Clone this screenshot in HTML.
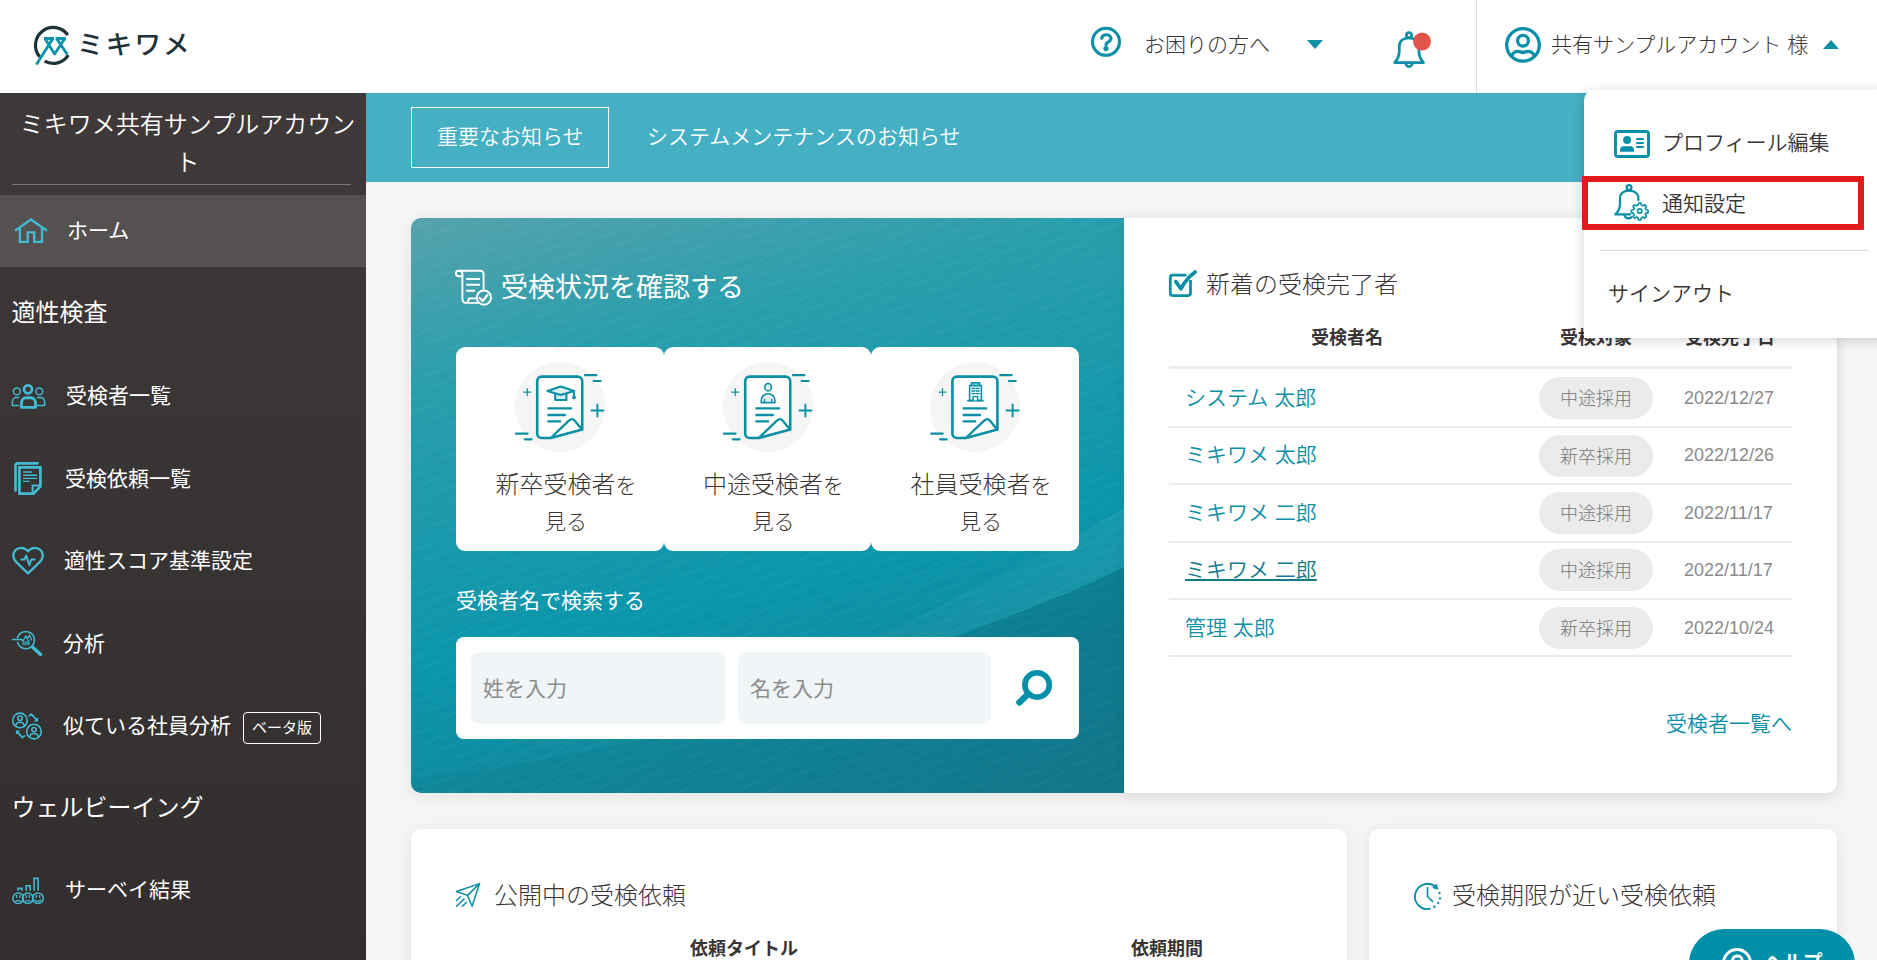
<!DOCTYPE html>
<html lang="ja">
<head>
<meta charset="utf-8">
<title>ミキワメ</title>
<style>
*{box-sizing:border-box;margin:0;padding:0}
html,body{width:1877px;height:960px;overflow:hidden;background:#f5f5f5}
body{font-family:"Liberation Sans","Noto Sans CJK JP",sans-serif;font-weight:300;color:#3a3535;font-size:21px;position:relative}
.abs{position:absolute}
.t{position:absolute;white-space:nowrap;line-height:1}
svg{position:absolute;overflow:visible}
/* header */
#hd{position:absolute;left:0;top:0;width:1877px;height:93px;background:#fff}
/* sidebar */
#sb{position:absolute;left:0;top:93px;width:366px;height:867px;background:linear-gradient(180deg,#3f3939 0%,#3a3535 40%,#322e2e 100%);color:#fff}
.w{font-weight:400}
/* main */
#nb{position:absolute;left:366px;top:93px;width:1511px;height:89px;background:#45afc3}
#tp{position:absolute;left:411px;top:218px;width:713px;height:575px;border-radius:10px 0 0 10px;overflow:hidden;
 background:
 repeating-linear-gradient(152deg,rgba(255,255,255,0) 0px,rgba(255,255,255,0) 11px,rgba(255,255,255,.038) 12px,rgba(255,255,255,0) 13.5px),
 repeating-linear-gradient(167deg,rgba(255,255,255,0) 0px,rgba(255,255,255,0) 8px,rgba(255,255,255,.03) 9px,rgba(255,255,255,0) 10.5px),
 linear-gradient(166deg,#56a2ac 0%,#3ea0ac 11.5%,#289eac 23.6%,#1c99ab 40%,#0a96ab 61%,#0f8b9f 76%,#158498 100%)}
#wp{position:absolute;left:1124px;top:218px;width:713px;height:575px;border-radius:0 10px 10px 0;background:#fff;box-shadow:0 2px 14px rgba(0,0,0,.06)}
.card{position:absolute;background:#fff;border-radius:9px}
.teal{color:#0d8fa6;font-weight:350}
.row{position:absolute;left:1169px;width:623px;height:2px;background:#ececec}
.badge{position:absolute;left:1539px;width:114px;height:42px;border-radius:21px;background:#ebebeb;color:#777;font-size:18px;text-align:center;line-height:45px;overflow:hidden}
.date{position:absolute;left:1684px;font-size:18px;color:#8a8a8a;line-height:1;white-space:nowrap}
.nm{position:absolute;left:1185px;font-size:21px;color:#0d8fa6;font-weight:350;line-height:1;white-space:nowrap}
.th{position:absolute;font-size:18px;font-weight:700;color:#3a3535;line-height:1;white-space:nowrap}
</style>
</head>
<body>

<!-- ================= MAIN BACKGROUND PARTS ================= -->
<div id="nb"></div>
<div class="abs" style="left:411px;top:107px;width:198px;height:61px;border:1px solid #fff"></div>
<div class="t" style="left:437px;top:125.5px;color:#fff;font-size:21px;font-weight:350">重要なお知らせ</div>
<div class="t" style="left:647px;top:125.5px;color:#fff;font-size:21px;font-weight:350">システムメンテナンスのお知らせ</div>

<!-- teal panel -->
<div class="abs" style="left:411px;top:218px;width:1426px;height:575px;border-radius:10px;box-shadow:0 3px 16px rgba(0,0,0,.08)"></div>
<div id="tp"><svg width="713" height="575" viewBox="0 0 713 575" style="left:0;top:0"><defs><linearGradient id="wg" x1="0" y1="0" x2="1" y2="0"><stop offset="0" stop-color="#002d41" stop-opacity=".04"/><stop offset=".45" stop-color="#002d41" stop-opacity=".09"/><stop offset="1" stop-color="#002d41" stop-opacity=".17"/></linearGradient><linearGradient id="lg" x1="0" y1="0" x2="1" y2="0"><stop offset="0" stop-color="#fff" stop-opacity="0"/><stop offset=".5" stop-color="#fff" stop-opacity=".01"/><stop offset="1" stop-color="#fff" stop-opacity=".05"/></linearGradient></defs><path d="M713 349 C640 386 560 410 470 448 C380 486 200 540 0 560 L0 575 L713 575 Z" fill="url(#wg)"/><path d="M713 290 C640 335 560 375 470 415 C380 455 200 530 60 575 L90 575 C200 556 380 486 470 448 C560 410 640 386 713 349 Z" fill="url(#lg)"/></svg></div>
<div class="t w" style="left:501px;top:275px;color:#fff;font-size:27px">受検状況を確認する</div>

<div class="card" style="left:456px;top:347px;width:208px;height:204px"></div>
<div class="card" style="left:664px;top:347px;width:207px;height:204px"></div>
<div class="card" style="left:871px;top:347px;width:208px;height:204px"></div>
<div class="abs" style="left:515px;top:362px;width:90px;height:90px;border-radius:50%;background:#f5f5f5"></div>
<div class="abs" style="left:723px;top:362px;width:90px;height:90px;border-radius:50%;background:#f5f5f5"></div>
<div class="abs" style="left:930px;top:362px;width:90px;height:90px;border-radius:50%;background:#f5f5f5"></div>
<div class="abs" style="left:462px;top:467px;width:208px;text-align:center;line-height:35px;font-size:24px;color:#3a3535">新卒受検者<span style="font-size:21px">を<br>見る</span></div>
<div class="abs" style="left:670px;top:467px;width:207px;text-align:center;line-height:35px;font-size:24px;color:#3a3535">中途受検者<span style="font-size:21px">を<br>見る</span></div>
<div class="abs" style="left:877px;top:467px;width:208px;text-align:center;line-height:35px;font-size:24px;color:#3a3535">社員受検者<span style="font-size:21px">を<br>見る</span></div>

<div class="t w" style="left:456px;top:590px;color:#fff;font-size:21px">受検者名で検索する</div>
<div class="card" style="left:456px;top:637px;width:623px;height:102px;border-radius:8px"></div>
<div class="abs" style="left:471px;top:652px;width:254px;height:72px;border-radius:9px;background:#f0f5f8"></div>
<div class="abs" style="left:738px;top:652px;width:253px;height:72px;border-radius:9px;background:#f0f5f8"></div>
<div class="t w" style="left:483px;top:678px;color:#8c8c8c;font-size:21px">姓を入力</div>
<div class="t w" style="left:750px;top:678px;color:#8c8c8c;font-size:21px">名を入力</div>

<!-- white panel -->
<div id="wp"></div>
<div class="t" style="left:1206px;top:273px;font-size:24px;color:#3a3535">新着の受検完了者</div>
<div class="th" style="left:1311px;top:329px">受検者名</div>
<div class="th" style="left:1560px;top:329px">受検対象</div>
<div class="th" style="left:1685px;top:329px">受検完了日</div>
<div class="row" style="top:366px;height:3px;background:#eeeeee"></div>
<div class="row" style="top:426px"></div>
<div class="row" style="top:483px"></div>
<div class="row" style="top:541px"></div>
<div class="row" style="top:598px"></div>
<div class="row" style="top:655px;height:2px;background:#e9e9e9"></div>

<div class="nm" style="top:387px">システム 太郎</div>
<div class="nm" style="top:444px">ミキワメ 太郎</div>
<div class="nm" style="top:502px">ミキワメ 二郎</div>
<div class="nm" style="top:559px;color:#137a8c;text-decoration:underline;text-underline-offset:1.5px;text-decoration-thickness:2px">ミキワメ 二郎</div>
<div class="nm" style="top:617px">管理 太郎</div>

<div class="badge" style="top:377px">中途採用</div>
<div class="badge" style="top:435px">新卒採用</div>
<div class="badge" style="top:492px">中途採用</div>
<div class="badge" style="top:549px">中途採用</div>
<div class="badge" style="top:607px">新卒採用</div>

<div class="date" style="top:389px">2022/12/27</div>
<div class="date" style="top:446px">2022/12/26</div>
<div class="date" style="top:504px">2022/11/17</div>
<div class="date" style="top:561px">2022/11/17</div>
<div class="date" style="top:619px">2022/10/24</div>

<div class="t teal" style="left:1666px;top:713px;font-size:21px">受検者一覧へ</div>

<!-- bottom cards -->
<div class="card" style="left:411px;top:829px;width:936px;height:200px;border-radius:10px;box-shadow:0 3px 16px rgba(0,0,0,.08)"></div>
<div class="card" style="left:1369px;top:829px;width:468px;height:200px;border-radius:10px;box-shadow:0 3px 16px rgba(0,0,0,.08)"></div>
<div class="t" style="left:494px;top:884px;font-size:24px;color:#3a3535">公開中の受検依頼</div>
<div class="t" style="left:1452px;top:884px;font-size:24px;color:#3a3535">受検期限が近い受検依頼</div>
<div class="th" style="left:690px;top:940px">依頼タイトル</div>
<div class="th" style="left:1131px;top:940px">依頼期間</div>

<!-- help pill -->
<div class="abs" style="left:1689px;top:929px;width:166px;height:70px;border-radius:35px;background:#008fa8"></div>
<div class="t" style="left:1764px;top:953px;font-size:19.5px;font-weight:700;color:#fff">ヘルプ</div>

<!-- ================= HEADER ================= -->
<div id="hd"></div>
<div class="t" style="left:77px;top:32px;font-size:26.5px;font-weight:500;letter-spacing:2.2px;color:#1d3338">ミキワメ</div>
<div class="t" style="left:1144px;top:34px;font-size:21px;color:#3a3535">お困りの方へ</div>
<div class="abs" style="left:1307px;top:40px;width:0;height:0;border-left:8.5px solid transparent;border-right:8.5px solid transparent;border-top:9px solid #0e8fa5"></div>
<div class="abs" style="left:1476px;top:0;width:1px;height:93px;background:#dcdcdc"></div>
<div class="t" style="left:1551px;top:34px;font-size:21px;color:#3a3535">共有サンプルアカウント 様</div>
<div class="abs" style="left:1823px;top:40px;width:0;height:0;border-left:8.5px solid transparent;border-right:8.5px solid transparent;border-bottom:9px solid #0e8fa5"></div>

<!-- ================= SIDEBAR ================= -->
<div id="sb"></div>
<div class="abs" style="left:12px;top:106px;width:354px;text-align:center;font-size:24px;line-height:37.5px;color:#fff;padding:0 3px 0 0;font-weight:350">ミキワメ共有サンプルアカウント</div>
<div class="abs" style="left:12px;top:184px;width:339px;height:1px;background:#777"></div>
<div class="abs" style="left:0;top:195px;width:366px;height:72px;background:#565151"></div>
<div class="t w" style="left:67px;top:220px;color:#fff">ホーム</div>
<div class="t w" style="left:11.5px;top:301px;color:#fff;font-size:24px">適性検査</div>
<div class="t w" style="left:66px;top:385px;color:#fff">受検者一覧</div>
<div class="t w" style="left:65px;top:468px;color:#fff">受検依頼一覧</div>
<div class="t w" style="left:64px;top:550px;color:#fff">適性スコア基準設定</div>
<div class="t w" style="left:63px;top:633px;color:#fff">分析</div>
<div class="t w" style="left:63px;top:715px;color:#fff">似ている社員分析</div>
<div class="abs" style="left:243px;top:712px;width:78px;height:32px;border:1px solid #fff;border-radius:4px;color:#fff;font-size:15px;line-height:30px;text-align:center;font-weight:400">ベータ版</div>
<div class="t w" style="left:11.5px;top:796px;color:#fff;font-size:24px">ウェルビーイング</div>
<div class="t w" style="left:65px;top:879px;color:#fff">サーベイ結果</div>

<!-- ================= DROPDOWN ================= -->
<div class="abs" style="left:1584px;top:90px;width:300px;height:248px;border-radius:10px 0 0 0;background:#fff;box-shadow:0 2px 12px rgba(0,0,0,.18)"></div>
<div class="t" style="left:1662px;top:132px;font-size:21px;color:#3a3535;font-weight:350">プロフィール編集</div>
<div class="t" style="left:1662px;top:193px;font-size:21px;color:#3a3535;font-weight:350">通知設定</div>
<div class="abs" style="left:1599px;top:250px;width:270px;height:1px;background:#dcdcdc"></div>
<div class="t" style="left:1608px;top:283px;font-size:21px;color:#3a3535;font-weight:350">サインアウト</div>
<div class="abs" style="left:1582px;top:176px;width:282px;height:54px;border:6px solid #e31b1c;border-radius:1px"></div>

<svg width="1877" height="960" viewBox="0 0 1877 960" style="left:0;top:0;pointer-events:none" fill="none" stroke-linecap="round" stroke-linejoin="round">
<!-- logo -->
<g id="logo">
<path d="M67.8 35 A17.8 17.8 0 1 0 39.7 56.8" stroke="#1d3338" stroke-width="3.2" stroke-linecap="butt"/>
<path d="M44.6 61.2 A17.8 17.8 0 0 0 68.3 55.1" stroke="#1d3338" stroke-width="3.2" stroke-linecap="butt"/>
<path d="M36.4 64.6 L53 38.4 M45 38.4 L54.6 54 L64.9 38.4 M56.5 38.4 L67.4 54.6" stroke="#0e93ab" stroke-width="2.8" stroke-linecap="butt"/>
<path d="M44 38.6 H54 M55.8 38.6 H65.8" stroke="#0e93ab" stroke-width="3.2" stroke-linecap="butt"/>
</g>
<!-- header help -->
<g stroke="#0b8fa8">
<circle cx="1106" cy="41.8" r="13.5" stroke-width="3.1"/>
<path d="M1101.6 38.2 C1102.4 35.8 1104.2 34.8 1106.3 34.8 C1109 34.8 1111 36.4 1111 38.5 C1111 41 1108.6 41.6 1107 42.8 C1106.2 43.4 1106 44 1106 45" stroke-width="3.1"/>
<circle cx="1106" cy="48.6" r="2.6" fill="#0b8fa8" stroke="none"/>
</g>
<!-- header bell -->
<g stroke="#0b8fa8" stroke-width="2.7">
<path d="M1394.6 62.6 C1398 59 1399.3 56 1399.3 51 L1399.3 46.5 C1399.3 41 1403.5 37.8 1409 37.8 C1414.5 37.8 1418.9 41 1418.9 46.5 L1418.9 51 C1418.9 56 1420 59 1423.6 62.6 Z"/>
<circle cx="1409" cy="35.3" r="2.6"/>
<path d="M1405.8 63.2 A3.2 3.4 0 0 0 1412.2 63.2"/>
</g>
<circle cx="1422" cy="41.6" r="9" fill="#e2544a"/>
<!-- header user -->
<g stroke="#0b8fa8" stroke-width="3.3">
<circle cx="1523" cy="44.9" r="16.3"/>
<circle cx="1523" cy="40.7" r="5.4"/>
<path d="M1511.6 56 C1513 52.4 1516 51.2 1518.5 51.4 C1520 51.6 1521.5 52.5 1523 52.5 C1524.5 52.5 1526 51.6 1527.5 51.4 C1530 51.2 1533 52.4 1534.4 56"/>
</g>
<!-- dropdown: id card -->
<g>
<rect x="1615.5" y="131.5" width="33" height="25" rx="2.5" stroke="#0b8fa8" stroke-width="2.9"/>
<circle cx="1627.1" cy="140" r="4" fill="#0b8fa8"/>
<path d="M1620 151.8 V150 A3.8 3.8 0 0 1 1623.8 146.2 H1630.2 A3.8 3.8 0 0 1 1634 150 V151.8 Z" fill="#0b8fa8"/>
<path d="M1636.2 138.9 H1643.8 M1636.2 142.9 H1643.8 M1636.2 146.9 H1643.8" stroke="#0b8fa8" stroke-width="2" stroke-linecap="butt"/>
</g>
<!-- dropdown: bell gear -->
<g stroke="#0b8fa8" stroke-width="2.3">
<path d="M1638.4 200 L1638.4 198.6 C1638.4 193.4 1634.2 190.6 1629 190.6 C1623.8 190.6 1620 193.4 1620 198.6 L1620 204 C1620 208.6 1618.6 211.4 1615.4 214.4 H1630"/>
<circle cx="1629" cy="187.6" r="2.4"/>
<path d="M1624.4 215 C1625 217.4 1626.6 218.4 1628.6 218.4 C1629.8 218.4 1630.8 218 1631.4 217.2"/>
</g>
<g stroke="#0b8fa8" stroke-width="1.8" transform="translate(1639.7 211) scale(.92) translate(-1639.7 -211)">
<circle cx="1639.7" cy="211" r="2.3"/>
<path d="M1638.4 202.4 h2.6 l0.5 2.2 l1.7 0.8 l2 -1.2 l1.8 1.8 l-1.2 2 l0.8 1.7 l2.2 0.5 v2.6 l-2.2 0.5 l-0.8 1.7 l1.2 2 l-1.8 1.8 l-2 -1.2 l-1.7 0.8 l-0.5 2.2 h-2.6 l-0.5 -2.2 l-1.7 -0.8 l-2 1.2 l-1.8 -1.8 l1.2 -2 l-0.8 -1.7 l-2.2 -0.5 v-2.6 l2.2 -0.5 l0.8 -1.7 l-1.2 -2 l1.8 -1.8 l2 1.2 l1.7 -0.8 Z" fill="#fff"/>
<circle cx="1639.7" cy="211" r="2.3" fill="#fff"/>
</g>
<!-- sidebar: home -->
<g stroke="#41bcd3" stroke-width="2.3" stroke-linejoin="miter">
<path d="M15.8 230.2 L30.9 219.5 L46.3 230.2"/>
<path d="M19.9 227.8 V241.8 H27.7 V232.4 H34.2 V241.8 H42 V227.8" stroke-linecap="butt"/>
</g>
<!-- sidebar: users -->
<g stroke="#41bcd3">
<circle cx="28" cy="389.3" r="4" stroke-width="2.8"/>
<path d="M21.5 407.4 V402.6 A4.8 4.8 0 0 1 26.3 397.8 H30.7 A4.8 4.8 0 0 1 35.5 402.6 V407.4 Z" stroke-width="2.9"/>
<circle cx="16.9" cy="391.4" r="3.4" stroke-width="1.5"/>
<circle cx="39.3" cy="391.4" r="3.4" stroke-width="1.5"/>
<path d="M18.8 397.6 H16.6 A4.2 4.2 0 0 0 12.4 401.8 V405.6 H18.8" stroke-width="1.5"/>
<path d="M37.4 397.6 H40.4 A4.2 4.2 0 0 1 44.6 401.8 V405.6 H37.4" stroke-width="1.5"/>
</g>
<!-- sidebar: docs -->
<g stroke="#41bcd3" stroke-width="2.7" stroke-linejoin="miter">
<path d="M37.6 463.3 H17.8 A2.3 2.3 0 0 0 15.5 465.6 V490.6" stroke-linejoin="round"/>
<path d="M19.4 467.3 H40.4 V486.4 L33.4 493.6 H19.4 Z"/>
<path d="M40.2 485.6 H32.6 V493.4" stroke-width="2"/>
<path d="M23 472 H32 M23 475.2 H37 M23 478.4 H37 M23 481.4 H29.7" stroke-width="1.4" stroke-linecap="butt"/>
</g>
<!-- sidebar: heart -->
<g stroke="#41bcd3">
<path d="M28 551.3 C26 548.8 23.5 547.9 21.2 547.9 C16.5 547.9 13.3 551.3 13.3 555.5 C13.3 558.5 14.8 560.6 16.8 562.6 L28 573.4 L39.2 562.6 C41.2 560.6 42.8 558.5 42.8 555.5 C42.8 551.3 39.5 547.9 34.9 547.9 C32.5 547.9 30 548.8 28 551.3 Z" stroke-width="2.3"/>
<path d="M21.2 559.5 H24.4 L26.2 555.4 L29.4 565.2 L31.2 559.5 H34.8" stroke-width="1.9"/>
</g>
<!-- sidebar: analysis -->
<g stroke="#41bcd3">
<path d="M17.6 637.6 A8.6 8.6 0 1 1 17.6 642.6" stroke-width="1.6"/>
<path d="M32.4 647 L40.6 654.4" stroke-width="3.4"/>
<path d="M12.2 639.5 H21.9 L22.8 641.4 L25.9 635.8 L27.3 638.7 L29.4 635.3 L31.7 640" stroke-width="1.3"/>
<path d="M22.3 645 V642.8 H24.2 V645 Z M24.6 645 V641 H26.6 V645 Z M27 645 V639.6 H29.8 V645 Z" fill="#348fa2" stroke="none"/>
<rect x="22.3" y="641.6" width="7.5" height="3.5" fill="#348fa2" stroke="none" opacity=".8"/>
</g>
<!-- sidebar: similar -->
<g stroke="#41bcd3" stroke-width="1.6">
<circle cx="20" cy="720.4" r="7.3"/>
<circle cx="20" cy="718.3" r="2.2" stroke-width="1.5"/>
<path d="M15.6 726 C16 723.4 17.8 722.2 20 722.2 C22.2 722.2 24 723.4 24.4 726" stroke-width="1.5"/>
<circle cx="34" cy="731.6" r="7.3"/>
<circle cx="34" cy="729.6" r="2.2" stroke-width="1.5"/>
<path d="M29.6 737.2 C30 734.6 31.8 733.4 34 733.4 C36.2 733.4 38 734.6 38.4 737.2" stroke-width="1.5"/>
<path d="M29.2 715.8 L31.4 714.2 L36.6 719.8" stroke-width="1.7"/>
<path d="M38.2 717.2 V721.6 H33.8 Z" fill="#41bcd3" stroke="none"/>
<path d="M24.6 735.8 L22.4 737.6 L17.4 732.2" stroke-width="1.7"/>
<path d="M15.9 734.8 V730.6 H20.2 Z" fill="#41bcd3" stroke="none"/>
</g>
<!-- sidebar: survey -->
<g stroke="#41bcd3" stroke-width="1.5">
<circle cx="18.2" cy="898.3" r="5.3"/>
<circle cx="27.8" cy="898.3" r="5.3"/>
<circle cx="38" cy="898.3" r="5.3"/>
<path d="M16.6 895 V898 M19.8 895 V898 M26.2 895 V898 M29.4 895 V898 M36.4 895 V898 M39.6 895 V898" stroke-width="1.3" stroke-linecap="butt"/>
<path d="M15.8 901.2 Q18.2 899.4 20.6 901.2 M25.4 900.8 H30.2 M35.2 900 Q38 902.8 40.8 900" stroke-width="1.3"/>
<path d="M18 890.8 V888.4 H22 V890.8 M26.2 890.8 V885.9 H30.2 V890.8 M34.1 890.8 V878.4 H38.1 V890.8" stroke-width="1.6" stroke-linecap="butt" stroke-linejoin="miter"/>
</g>
<!-- scroll check -->
<g stroke="#fff" stroke-width="1.9">
<path d="M462.4 276.2 H458.6 A2.7 2.7 0 0 1 458.6 270.8 H480.4 A3.2 3.2 0 0 1 483.6 274 V289.4"/>
<path d="M459.2 270.8 A3.2 3.2 0 0 1 462.4 274 V299.6 A3.3 3.3 0 0 0 465.7 302.9 H478.2"/>
<path d="M465.7 302.9 C467.8 302.9 468.6 301 468.8 298.4 H476.4"/>
<path d="M466.2 279 H480 M466.2 284.8 H480 M466.2 290.8 H475" stroke-linecap="butt"/>
<circle cx="483.9" cy="297.6" r="7.1" stroke-width="2"/>
<path d="M479.8 298 L482.8 301 L487.4 295" stroke-width="2.2"/>
</g>
<!-- card doc icons -->
<g stroke="#0b8fa5">
<path d="M550.7 438 H541.7 A4.5 4.5 0 0 1 537.2 433.5 V381.1 A4.5 4.5 0 0 1 541.7 376.6 H577.7 A4.5 4.5 0 0 1 582.2 381.1 V429.4 L550.7 438 Z" fill="#fff" stroke-width="2.6"/>
<path d="M550.7 438 L569.2 420.4 Q572.4 417.6 575 421 L582 429.4" stroke-width="2.4"/>
<path d="M547.4 408.4 H572 M547.4 415 H565.8 M547.4 421.4 H561" stroke-width="2.4" stroke-linecap="butt"/>
<path d="M527.3 388.5 V395.7 M523.7 392.1 H530.9" stroke-width="1.2"/>
<path d="M597.4 404.5 V416.5 M591.4 410.5 H603.4" stroke-width="1.9"/>
<path d="M585 375.1 H596.4 M593.7 381 H600.6 M516 433.6 H527.5 M524.8 439.3 H531.6" stroke-width="2.2"/>
</g>
<g stroke="#0b8fa5" transform="translate(208 0)">
<path d="M550.7 438 H541.7 A4.5 4.5 0 0 1 537.2 433.5 V381.1 A4.5 4.5 0 0 1 541.7 376.6 H577.7 A4.5 4.5 0 0 1 582.2 381.1 V429.4 L550.7 438 Z" fill="#fff" stroke-width="2.6"/>
<path d="M550.7 438 L569.2 420.4 Q572.4 417.6 575 421 L582 429.4" stroke-width="2.4"/>
<path d="M547.4 408.4 H572 M547.4 415 H565.8 M547.4 421.4 H561" stroke-width="2.4" stroke-linecap="butt"/>
<path d="M527.3 388.5 V395.7 M523.7 392.1 H530.9" stroke-width="1.2"/>
<path d="M597.4 404.5 V416.5 M591.4 410.5 H603.4" stroke-width="1.9"/>
<path d="M585 375.1 H596.4 M593.7 381 H600.6 M516 433.6 H527.5 M524.8 439.3 H531.6" stroke-width="2.2"/>
</g>
<g stroke="#0b8fa5" transform="translate(415.2 0)">
<path d="M550.7 438 H541.7 A4.5 4.5 0 0 1 537.2 433.5 V381.1 A4.5 4.5 0 0 1 541.7 376.6 H577.7 A4.5 4.5 0 0 1 582.2 381.1 V429.4 L550.7 438 Z" fill="#fff" stroke-width="2.6"/>
<path d="M550.7 438 L569.2 420.4 Q572.4 417.6 575 421 L582 429.4" stroke-width="2.4"/>
<path d="M547.4 408.4 H572 M547.4 415 H565.8 M547.4 421.4 H561" stroke-width="2.4" stroke-linecap="butt"/>
<path d="M527.3 388.5 V395.7 M523.7 392.1 H530.9" stroke-width="1.2"/>
<path d="M597.4 404.5 V416.5 M591.4 410.5 H603.4" stroke-width="1.9"/>
<path d="M585 375.1 H596.4 M593.7 381 H600.6 M516 433.6 H527.5 M524.8 439.3 H531.6" stroke-width="2.2"/>
</g>
<!-- grad cap -->
<g stroke="#0b8fa5" stroke-width="2.1">
<path d="M555.2 393.6 V400 H566.4 V393.6" fill="#d9eff3"/>
<path d="M547.4 390.9 L560.7 386.6 L574.2 390.9 L560.7 394.9 Z" fill="#d9eff3"/>
<path d="M574 391.2 V396.4"/>
<circle cx="574" cy="397.4" r="1.9" fill="#0b8fa5" stroke="none"/>
</g>
<!-- person -->
<g stroke="#0b8fa5" stroke-width="1.6">
<ellipse cx="768.1" cy="387.2" rx="3.3" ry="3.7" fill="#dff1f4"/>
<path d="M761.2 402.6 V400.4 A6.9 6.7 0 0 1 775 400.4 V402.6 Z" fill="#dff1f4"/>
<path d="M764.5 399 V402.4 M771.7 399 V402.4" stroke-width="1.4" stroke-linecap="butt"/>
</g>
<!-- building -->
<g stroke="#0b8fa5" stroke-width="1.5" stroke-linejoin="miter">
<rect x="969.6" y="385.5" width="11.8" height="15" fill="#e6f4f6"/>
<rect x="971.4" y="382.8" width="8.2" height="2.7" fill="#8fcfd9"/>
<path d="M967.9 400.7 H983" stroke-width="1.7"/>
<path d="M971.9 388.3 H974.7 M976.3 388.3 H979.1 M971.9 391 H974.7 M976.3 391 H979.1 M971.9 393.6 H974.7 M976.3 393.6 H979.1" stroke-width="1.3"/>
<path d="M973.2 400.4 V396.6 H977.6 V400.4" fill="#fff" stroke-width="1.4"/>
</g>
<!-- search -->
<g stroke="#058fa8">
<circle cx="1037.1" cy="684.9" r="12.2" stroke-width="5.6"/>
<path d="M1028 694 L1019.4 702.6" stroke-width="6.3"/>
</g>
<!-- checkbox -->
<g stroke="#0b8fa5">
<path d="M1186.4 275.1 H1172.5 A2.2 2.2 0 0 0 1170.3 277.3 V293.3 A2.2 2.2 0 0 0 1172.5 295.5 H1188.3 A2.2 2.2 0 0 0 1190.5 293.3 V280" stroke-width="2.75" stroke-linecap="butt"/>
<path d="M1175.8 281.6 L1180.9 288.8 C1184.6 281.8 1189 276.4 1195.2 272" stroke-width="3.7"/>
</g>
<!-- paper plane -->
<g stroke="#0b8fa5" stroke-width="1.5">
<path d="M479.6 883.6 L456.4 891.5 L467.5 895.4 L472.1 906.3 Z M467.5 895.4 L479.6 883.6"/>
<path d="M456.6 900.5 L460.4 896.8 M456.6 906.3 L464.1 898.9 M462.4 906.3 L466.2 902.6"/>
</g>
<!-- clock -->
<g stroke="#0b8fa5" stroke-width="1.85">
<path d="M1435.6 886.8 A12.6 12.6 0 1 0 1430.6 908.7" stroke-linecap="butt"/>
<path d="M1427.5 887.6 V896.5 L1432.5 901.3" stroke-width="1.7"/>
<path d="M1436.5 884.3 L1437.9 889.4 L1433.1 887.8 Z" fill="#0b8fa5" stroke-width=".8"/>
<path d="M1439 892 L1439.9 894 M1440.1 897.4 L1440 899.4 M1438.7 902.2 L1437.6 903.9 M1435.2 906.2 L1433.4 907.4" stroke-width="2.1" stroke-linecap="butt"/>
</g>
<!-- help pill icon -->
<g stroke="#fff" stroke-width="3">
<circle cx="1737" cy="963" r="13.5"/>
<path d="M1732.6 959.4 C1733.4 957 1735.2 956 1737.3 956 C1740 956 1742 957.6 1742 959.7"/>
</g>


</svg>

</body>
</html>
